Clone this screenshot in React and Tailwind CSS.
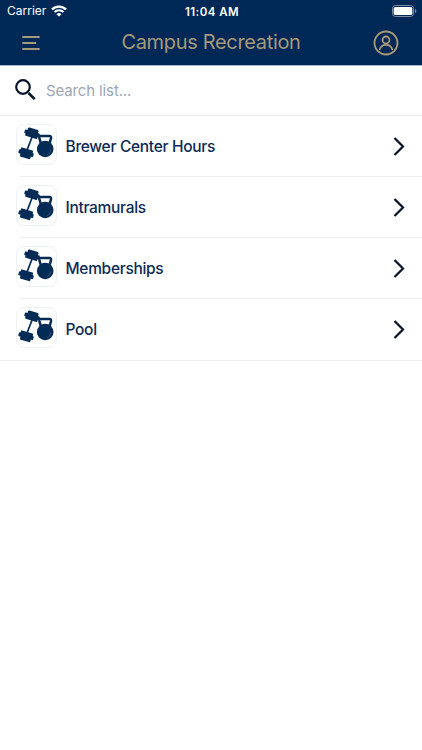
import { useState } from "react";

const items = ["Brewer Center Hours", "Intramurals", "Memberships", "Pool"];

function WifiIcon() {
  return (
    <svg width="16" height="12" viewBox="0 0 16 12" fill="none">
      <path d="M1 4.400a10 10 0 0 1 14 0" stroke="white" strokeWidth="2.300" />
      <path d="M3.500 7.100a6.300 6.300 0 0 1 9 0" stroke="white" strokeWidth="2.100" />
      <path d="M8 11.600 5.500 9.200a3.500 3.500 0 0 1 5 0Z" fill="white" />
    </svg>
  );
}

function BatteryIcon() {
  return (
    <svg width="25" height="12" viewBox="0 0 25 12" fill="none">
      <rect x="0.5" y="0.5" width="21" height="11" rx="3" stroke="#7d8ba5" />
      <rect x="1.700" y="1.900" width="18.600" height="8.200" rx="1.600" fill="white" />
      <path d="M23 4v4c.9-.4 1.400-1.100 1.400-2S23.900 4.400 23 4Z" fill="#7d8ba5" />
    </svg>
  );
}

function GymIcon() {
  return (
    <svg className="-mt-px" width="40" height="40" viewBox="0 0 40 40" fill="#022b56">
      {/* dumbbell */}
      <path d="M15.800 11 9.300 28" stroke="#022b56" strokeWidth="1.700" />
      <g transform="rotate(17 15.200 9)">
        <rect x="7.400" y="7.400" width="15.600" height="4" rx="0.900" />
        <rect x="9" y="10" width="12.600" height="3.600" rx="0.900" />
        <rect x="9.800" y="4.500" width="11" height="3.800" rx="1.200" />
      </g>
      <g transform="rotate(17 9 29.300)">
        <rect x="1.300" y="27.200" width="15.400" height="4" rx="0.900" />
        <rect x="2.700" y="24.800" width="12.600" height="3.500" rx="0.900" />
        <rect x="3.800" y="30.300" width="10.800" height="3.700" rx="1.200" />
      </g>
      {/* kettlebell */}
      <path
        d="m23.700 19-1.300-4.900c-.3-1.400.3-2.100 1.500-2.100h8.600c1.200 0 1.800.7 1.500 2.100L32.700 19"
        stroke="#022b56"
        strokeWidth="2.500"
        fill="none"
      />
      <circle cx="28.200" cy="25" r="8.300" />
      <path d="M34 25.600a6 6 0 0 1-3.800 5" stroke="#49698a" strokeWidth="0.600" fill="none" />
    </svg>
  );
}

function Row({ label, last }) {
  return (
    <li className="relative flex h-[61px] items-center pl-4 pr-[17px]">
      <div className="mb-[5px] h-[41px] w-[41px] shrink-0 overflow-hidden rounded-[8px] border border-[#eff2f5]">
        <GymIcon />
      </div>
      <span className="ml-[8.500px] flex-1 whitespace-nowrap text-[15.500px] font-medium tracking-[-0.300px] text-[#0b2a55]">
        {label}
      </span>
      <svg width="12" height="20" viewBox="0 0 12 20" fill="none">
        <path d="m1.500 1 8.500 8.500-8.500 8.500" stroke="#08122a" strokeWidth="2.200" />
      </svg>
      <div
        className={`absolute right-0 h-px bg-[#eeeff1] ${last ? "-bottom-px left-0" : "bottom-0 left-5"}`}
      />
    </li>
  );
}

export default function App() {
  const [query, setQuery] = useState("");
  const visible = items.filter((item) =>
    item.toLowerCase().includes(query.toLowerCase())
  );

  return (
    <div className="h-[750px] w-[422px] overflow-hidden bg-white font-['Inter',sans-serif]">
      {/* Header */}
      <header className="h-[66px] border-b border-[#a9b6ca] bg-[#002856]">
        <div className="grid h-[21px] grid-cols-3 items-center pl-[7px] pr-[5px] text-white">
          <div className="flex items-center gap-[5px]">
            <span className="text-[12px] leading-[21px]">Carrier</span>
            <WifiIcon />
          </div>
          <span className="pt-[3px] text-center text-[11.500px] font-semibold leading-[18px] tracking-[0.450px]">
            11:04 AM
          </span>
          <div className="flex justify-end">
            <BatteryIcon />
          </div>
        </div>
        <div className="flex h-[44px] items-center justify-between pl-[22px] pr-[23px]">
          <button aria-label="Menu">
            <svg width="18" height="16" viewBox="0 0 18 16" fill="none">
              <path
                d="M1 2h16M1 8h12.500M1 14h16"
                stroke="#a69a79"
                strokeWidth="1.800"
                strokeLinecap="round"
              />
            </svg>
          </button>
          <h1 className="mb-0.5 ml-[9px] whitespace-nowrap text-[20px] tracking-[-0.330px] text-[#a69a79]">
            Campus Recreation
          </h1>
          <button aria-label="Profile">
            <svg width="26" height="26" viewBox="0 0 26 26" fill="none" stroke="#a69a79" strokeWidth="1.800">
              <circle cx="13" cy="13" r="11.500" />
              <circle cx="13" cy="10" r="3.500" />
              <path d="M6.800 19.300c.8-3 3.200-4.500 6.200-4.500s5.400 1.500 6.200 4.500" strokeLinecap="round" />
            </svg>
          </button>
        </div>
      </header>

      {/* Search */}
      <div className="flex h-[50px] items-center border-b border-[#eeeff1] pl-[15px]">
        <svg className="mb-px" width="22" height="22" viewBox="0 0 22 22" fill="none" stroke="#08122a" strokeWidth="2.200">
          <circle cx="8" cy="8" r="6.800" />
          <path d="m13.500 14 6.200 6.200" strokeWidth="2.600" />
        </svg>
        <input
          value={query}
          onChange={(e) => setQuery(e.target.value)}
          placeholder="Search list..."
          className="ml-[9px] w-72 pt-px text-[15px] tracking-[-0.130px] text-[#0b2a55] outline-none placeholder:text-[#9ca6b4]"
        />
      </div>

      {/* List */}
      <ul>
        {visible.map((item, i) => (
          <Row key={item} label={item} last={i === visible.length - 1} />
        ))}
      </ul>
    </div>
  );
}
